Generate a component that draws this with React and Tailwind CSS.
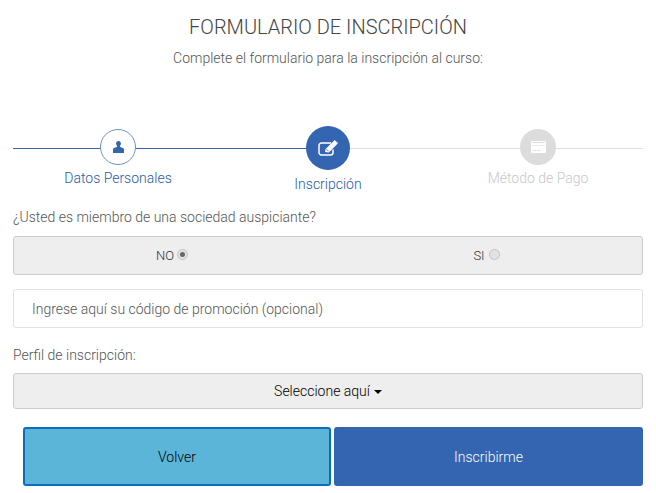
import { useState } from "react";

const UserIcon = () => (
  <svg width="11" height="12" viewBox="0 0 11 12" fill="#3465b0">
    <path d="M5.5 0C7 0 7.9 1 7.9 2.5c0 .9-.3 1.9-.9 2.6-.3.4-.2.8.3 1C9 6.7 11 7.1 11 8.6V12H0V8.6c0-1.500 2-1.900 3.700-2.500.5-.2.6-.6.3-1C3.400 4.400 3.100 3.400 3.100 2.500 3.100 1 4 0 5.500 0z" />
  </svg>
);

const EditIcon = () => (
  <svg width="21" height="16" viewBox="0 0 21 16" fill="none">
    <path d="M15 9.500v3a2.500 2.500 0 0 1-2.500 2.500h-9A2.500 2.500 0 0 1 1 12.500v-7A2.500 2.500 0 0 1 3.500 3H13" stroke="#fff" strokeWidth="1.500" />
    <path d="M7 12l.6-2.900L16.700 0 20 3.300 10.900 12.400z" fill="#fff" />
    <path d="M8.600 9.300l2.100 2.100" stroke="#3465b0" strokeWidth="0.800" />
  </svg>
);

const CardIcon = () => (
  <svg width="15" height="12" viewBox="0 0 15 12">
    <rect width="15" height="12" rx="1" fill="#fff" />
    <rect x="1" y="1" width="13" height="1" fill="#dcdcdc" />
    <rect x="1" y="4" width="13" height="1" fill="#ececec" />
    <rect x="2" y="9" width="3" height="1" fill="#dcdcdc" />
    <rect x="6" y="9" width="3" height="1" fill="#dcdcdc" />
  </svg>
);

function Radio({ checked, onClick }) {
  return (
    <button
      onClick={onClick}
      className="w-[11px] h-[11px] mb-[2px] rounded-full border border-[#c2c2c2] bg-[#e2e2e2] flex items-center justify-center"
    >
      {checked && <span className="w-[5px] h-[5px] rounded-full bg-[#666]" />}
    </button>
  );
}

export default function App() {
  const [miembro, setMiembro] = useState("NO");

  return (
    <div className="w-[656px] h-[493px] overflow-hidden bg-white font-['Roboto',sans-serif] font-light text-[14px] text-[#333]">
      <div className="pt-[15px] text-center">
        <h1 className="text-[20px] leading-[24px] text-[#444]">FORMULARIO DE INSCRIPCIÓN</h1>
        <p className="mt-[9px] leading-[20px] text-[#555]">Complete el formulario para la inscripción al curso:</p>
      </div>

      <div className="relative mx-[13px] mt-[58px] h-[85px] flex">
        <div className="absolute left-0 top-[22px] w-[315px] h-px bg-[#3465b0]" />
        <div className="absolute left-[315px] top-[22px] w-[315px] h-px bg-[#dddddd]" />

        <div className="relative w-[210px] flex flex-col items-center">
          <div className="w-[36px] h-[36px] mt-[3px] rounded-full border border-[#6f90c6] bg-white flex items-center justify-center">
            <UserIcon />
          </div>
          <span className="mt-[3px] leading-[20px] text-[#2a5aa8]">Datos Personales</span>
        </div>
        <div className="relative w-[210px] flex flex-col items-center">
          <div className="w-[44px] h-[44px] rounded-full bg-[#3465b0] flex items-center justify-center pl-[1px]">
            <EditIcon />
          </div>
          <span className="mt-[4px] leading-[20px] text-[#2a5aa8]">Inscripción</span>
        </div>
        <div className="relative w-[210px] flex flex-col items-center">
          <div className="w-[36px] h-[36px] mt-[3px] rounded-full bg-[#dcdcdc] flex items-center justify-center">
            <CardIcon />
          </div>
          <span className="mt-[3px] leading-[20px] text-[#c8c8c8]">Método de Pago</span>
        </div>
      </div>

      <div className="px-[13px]">
        <label className="block mt-[-4px] leading-[20px] text-[#555]">¿Usted es miembro de una sociedad auspiciante?</label>

        <div className="mt-[9px] h-[39px] flex rounded-[3px] border border-[#cccccc] bg-[#eeeeee] text-[13px]">
          <div className="w-1/2 flex items-center justify-center gap-[3px] pl-[2px]">
            <span>NO</span>
            <Radio checked={miembro === "NO"} onClick={() => setMiembro("NO")} />
          </div>
          <div className="w-1/2 flex items-center justify-center gap-[4px] pl-[3px]">
            <span>SI</span>
            <Radio checked={miembro === "SI"} onClick={() => setMiembro("SI")} />
          </div>
        </div>

        <input
          className="block w-full mt-[14px] h-[39px] px-[18px] rounded-[3px] border border-[#e2e2e2] text-[14px] outline-none placeholder:text-[#555]"
          placeholder="Ingrese aquí su código de promoción (opcional)"
        />

        <label className="block mt-[17px] leading-[20px] text-[#555]">Perfil de inscripción:</label>

        <button className="w-full mt-[8px] h-[36px] rounded-[3px] border border-[#cccccc] bg-[#eeeeee] text-[14px] text-black flex items-center justify-center gap-[4px]">
          Seleccione aquí
          <span className="mt-[2px] border-x-[4px] border-x-transparent border-t-[4px] border-t-black" />
        </button>

        <div className="mt-[18px] ml-[10px] flex gap-[3px]">
          <button className="w-[308px] h-[59px] pt-[1px] rounded-[3px] border-2 border-[#0a6ebd] bg-[#5bb5d9] text-[14px] text-black">Volver</button>
          <button className="w-[309px] h-[59px] pt-[1px] rounded-[3px] bg-[#3465b0] text-[14px] text-white">Inscribirme</button>
        </div>
      </div>
    </div>
  );
}
